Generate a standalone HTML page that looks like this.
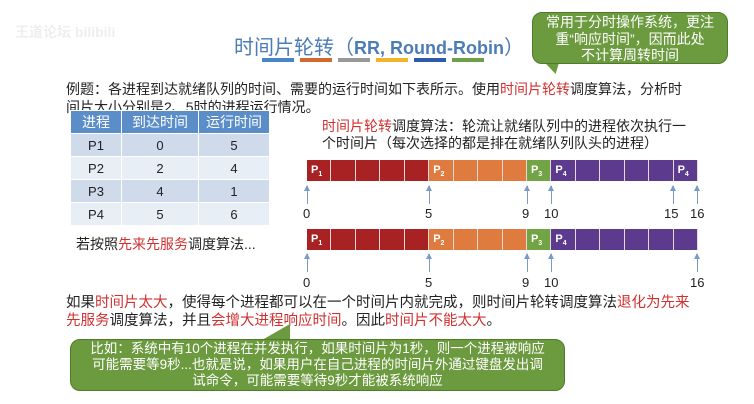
<!DOCTYPE html><html><head><meta charset="utf-8"><style>
body{margin:0;width:754px;height:404px;background:#fff;position:relative;overflow:hidden;font-family:"Liberation Sans","Noto Sans CJK SC",sans-serif;color:#222}
.a{position:absolute;white-space:nowrap}
.r{color:#d03030}
.t{font-size:14px;line-height:18px}
.bar{position:absolute;left:307px;width:391px;height:21px;display:flex}
.bar div{flex:1;border-right:1px solid #e8d8d8;box-sizing:border-box;color:#fff;font-size:11px;font-weight:bold;padding:4px 0 0 4px}
.R{background:#a82224}.O{background:#e07b40}.G{background:#72a446}.P{background:#5c3b8f}
.bar sub{font-size:7px}
.arr{position:absolute;width:1px;background:#7a9cc4}
.arr:before{content:"";position:absolute;left:-3px;top:-1px;border:3.5px solid transparent;border-bottom:6px solid #7a9cc4;border-top:0}
.n{position:absolute;font-size:13px;font-family:"Liberation Sans",sans-serif}
table{position:absolute;left:70px;top:110px;border-collapse:collapse;font-size:13px;text-align:center}
td,th{height:22px;border:1px solid #fff;padding:0}
th{background:#5b8ec9;color:#fff;font-weight:normal;font-size:14px}
.c1{background:#cfdaea}.c2{background:#e8eef6}
.bub{position:absolute;background:#6c9a3e;color:#fff;border-radius:10px;border:1px solid #4e7a2a;white-space:nowrap;text-align:center;box-sizing:border-box}
</style></head><body>
<div class="a" style="left:15px;top:22px;font-size:14px;color:#eee;font-weight:bold">王道论坛 bilibili</div>
<div class="a" style="left:234px;top:31px;font-size:20px;color:#4c7cb5">时间片轮转（<b style="font-size:18px">RR, Round-Robin</b>）</div>
<div class="a" style="left:262px;top:58px;display:flex;gap:6px">
<span style="width:32px;height:4px;background:#4a86c5"></span><span style="width:32px;height:4px;background:#d2692f"></span><span style="width:32px;height:4px;background:#999"></span><span style="width:32px;height:4px;background:#f0b429"></span><span style="width:32px;height:4px;background:#2e5aa8"></span><span style="width:32px;height:4px;background:#6ea04a"></span></div>
<div class="a" style="left:546px;top:58px;width:0;height:0;border-left:4px solid transparent;border-right:16px solid transparent;border-top:16px solid #6c9a3e;transform:skewX(35deg)"></div>
<div class="bub" style="left:532px;top:12px;width:196px;height:52px;font-size:14px;line-height:16.5px;padding-top:1px">常用于分时操作系统，更注<br>重“响应时间”，因而此处<br>不计算周转时间</div>
<div class="a t" style="left:66px;top:80px">例题：各进程到达就绪队列的时间、需要的运行时间如下表所示。使用<span class="r">时间片轮转</span>调度算法，分析时<br>间片大小分别是2、5时的进程运行情况。</div>
<table><tr><th style="width:50px">进程</th><th style="width:76px">到达时间</th><th style="width:70px">运行时间</th></tr>
<tr class="c1"><td>P1</td><td>0</td><td>5</td></tr><tr class="c2"><td>P2</td><td>2</td><td>4</td></tr>
<tr class="c1"><td>P3</td><td>4</td><td>1</td></tr><tr class="c2"><td>P4</td><td>5</td><td>6</td></tr></table>
<div class="a t" style="left:76px;top:235px;font-size:14px">若按照<span class="r">先来先服务</span>调度算法...</div>
<div class="a t" style="left:322px;top:118px;font-size:14px;line-height:17px"><span class="r">时间片轮转</span>调度算法：轮流让就绪队列中的进程依次执行一<br>个时间片（每次选择的都是排在就绪队列队头的进程）</div>
<div class="bar" style="top:160px"><div class="R">P<sub>1</sub></div><div class="R"></div><div class="R"></div><div class="R"></div><div class="R"></div><div class="O">P<sub>2</sub></div><div class="O"></div><div class="O"></div><div class="O"></div><div class="G">P<sub>3</sub></div><div class="P">P<sub>4</sub></div><div class="P"></div><div class="P"></div><div class="P"></div><div class="P"></div><div class="P">P<sub>4</sub></div></div>
<div class="bar" style="top:229px"><div class="R">P<sub>1</sub></div><div class="R"></div><div class="R"></div><div class="R"></div><div class="R"></div><div class="O">P<sub>2</sub></div><div class="O"></div><div class="O"></div><div class="O"></div><div class="G">P<sub>3</sub></div><div class="P">P<sub>4</sub></div><div class="P"></div><div class="P"></div><div class="P"></div><div class="P"></div><div class="P"></div></div>
<div class="arr" style="left:307px;top:186px;height:18px"></div><div class="arr" style="left:429px;top:186px;height:18px"></div><div class="arr" style="left:527px;top:186px;height:18px"></div><div class="arr" style="left:551px;top:186px;height:18px"></div><div class="arr" style="left:673px;top:186px;height:18px"></div><div class="arr" style="left:697px;top:186px;height:18px"></div>
<div class="n" style="left:303px;top:206px">0</div><div class="n" style="left:425px;top:206px">5</div><div class="n" style="left:522px;top:206px">9</div><div class="n" style="left:544px;top:206px">10</div><div class="n" style="left:664px;top:206px">15</div><div class="n" style="left:690px;top:206px">16</div>
<div class="arr" style="left:307px;top:254px;height:18px"></div><div class="arr" style="left:429px;top:254px;height:18px"></div><div class="arr" style="left:527px;top:254px;height:18px"></div><div class="arr" style="left:551px;top:254px;height:18px"></div><div class="arr" style="left:697px;top:254px;height:18px"></div>
<div class="n" style="left:303px;top:275px">0</div><div class="n" style="left:425px;top:275px">5</div><div class="n" style="left:522px;top:275px">9</div><div class="n" style="left:544px;top:275px">10</div><div class="n" style="left:690px;top:275px">16</div>
<div class="a t" style="left:66px;top:294px;font-size:14.5px">如果<span class="r">时间片太大</span>，使得每个进程都可以在一个时间片内就完成，则时间片轮转调度算法<span class="r">退化为先来</span><br><span class="r">先服务</span>调度算法，并且<span class="r">会增大进程响应时间</span>。因此<span class="r">时间片不能太大</span>。</div>
<div class="a" style="left:262px;top:324px;width:0;height:0;border-left:28px solid transparent;border-bottom:16px solid #6c9a3e"></div>
<div class="bub" style="left:70px;top:339px;width:495px;height:52px;font-size:13.5px;line-height:16px;padding-top:1px">比如：系统中有10个进程在并发执行，如果时间片为1秒，则一个进程被响应<br>可能需要等9秒...也就是说，如果用户在自己进程的时间片外通过键盘发出调<br>试命令，可能需要等待9秒才能被系统响应</div>
</body></html>
